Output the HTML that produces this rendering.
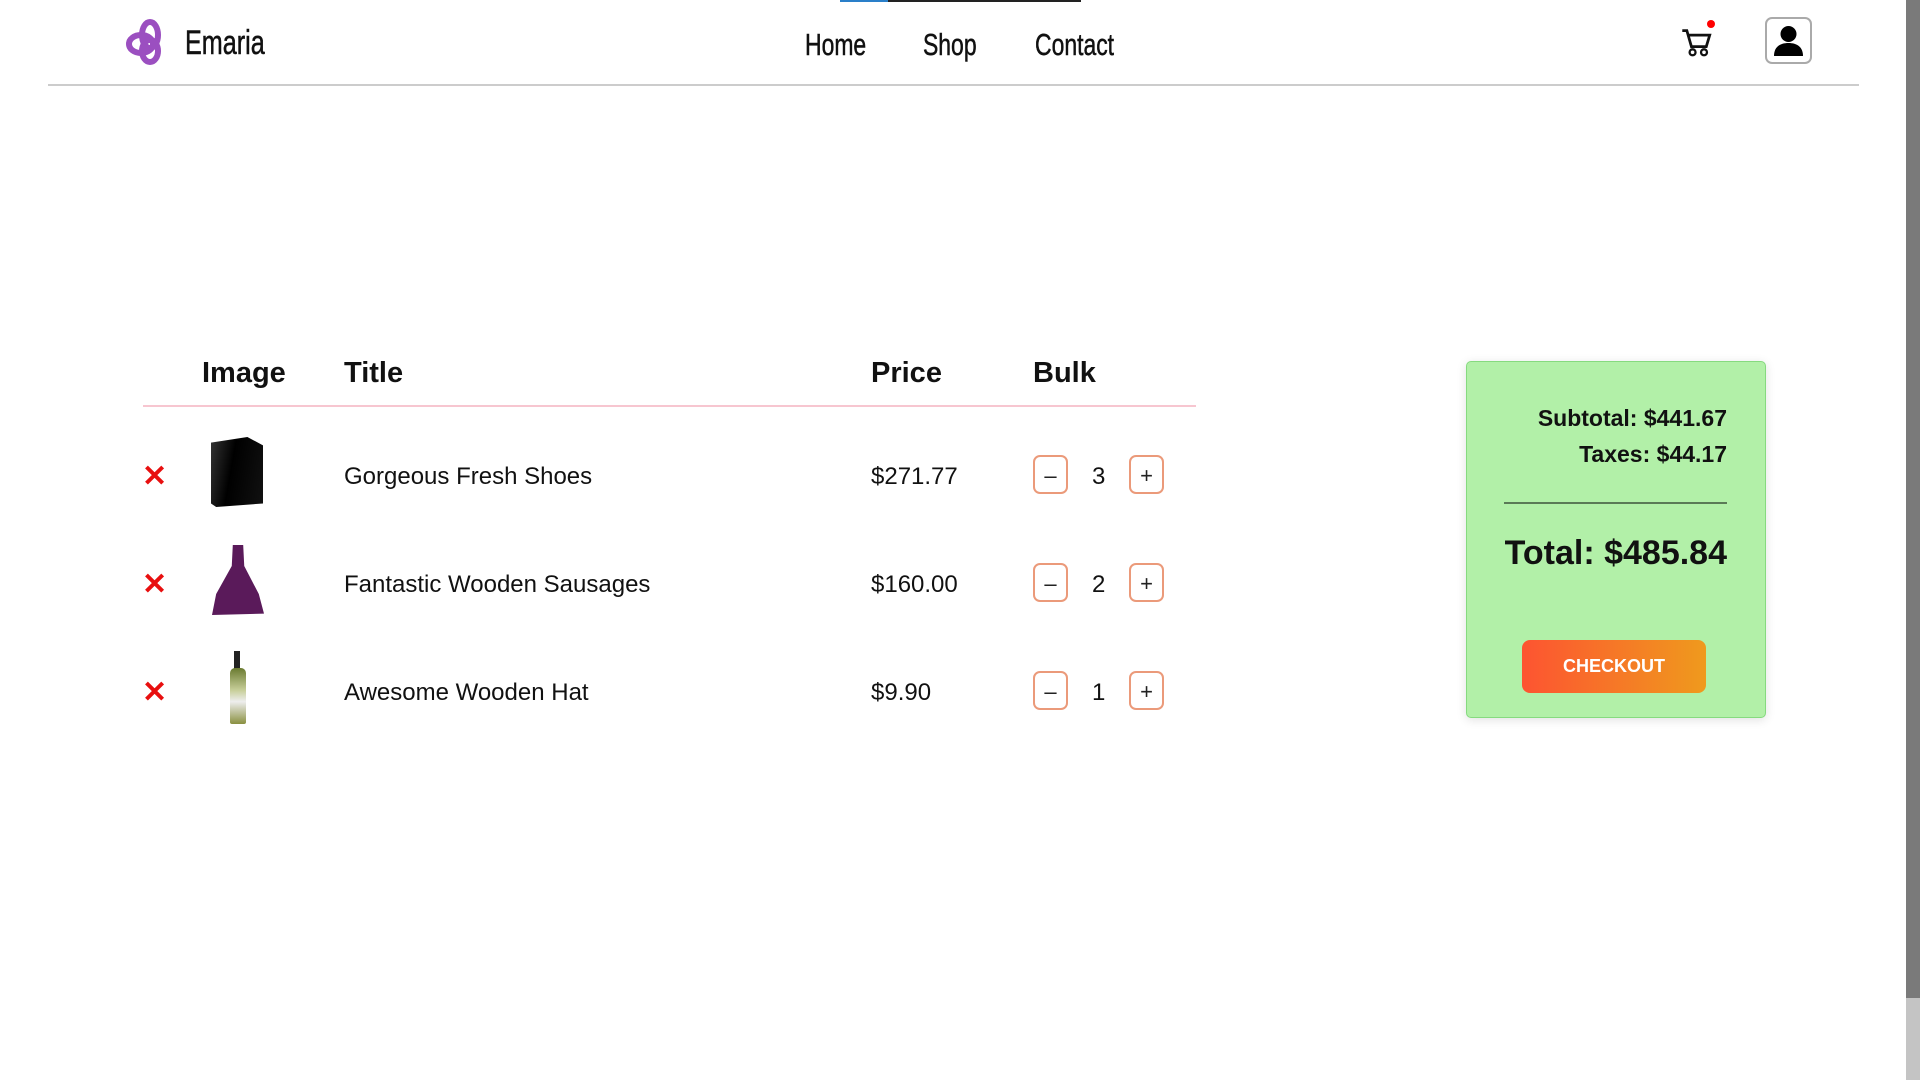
<!DOCTYPE html>
<html><head><meta charset="utf-8"><style>
body{margin:0;width:1920px;height:1080px;position:relative;background:#fff;font-family:"Liberation Sans",sans-serif;color:#111;overflow:hidden}
.a{position:absolute}
.nav{font-size:31px;transform:scaleX(.74);transform-origin:left center;top:27px;color:#111;-webkit-text-stroke:.5px #111}
.th{font-size:29px;font-weight:bold;top:357px}
.row{font-size:24px}
.btn{position:absolute;width:35px;height:39px;border:2px solid #eb9a7a;border-radius:7px;box-sizing:border-box;font-size:22px;text-align:center;line-height:37px;color:#222}
.x{color:#e80f0f;font-size:30px;font-weight:bold}
</style></head><body>
<div class="a" style="left:840px;top:0;width:48px;height:2px;background:#2a7fc9"></div>
<div class="a" style="left:888px;top:0;width:193px;height:2px;background:#222"></div>
<svg class="a" style="left:124px;top:19px" width="46" height="46" viewBox="0 0 46 46"><g fill="none" stroke="#9b4fc0" stroke-width="6"><ellipse cx="17" cy="25" rx="12" ry="9"/><ellipse cx="26" cy="16" rx="8" ry="13"/><ellipse cx="26" cy="32" rx="8" ry="11"/></g></svg>
<div class="a nav" style="left:185px;top:24px;font-size:34px">Emaria</div>
<div class="a nav" style="left:805px">Home</div>
<div class="a nav" style="left:923px">Shop</div>
<div class="a nav" style="left:1035px">Contact</div>
<svg class="a" style="left:1680px;top:26px" width="32" height="32" viewBox="0 0 28 28"><path d="M2 4h4l4 14h13l3-10H8" fill="none" stroke="#111" stroke-width="2.4"/><circle cx="11" cy="23" r="2.6" fill="none" stroke="#111" stroke-width="2"/><circle cx="21" cy="23" r="2.6" fill="none" stroke="#111" stroke-width="2"/></svg>
<div class="a" style="left:1707px;top:20px;width:8px;height:8px;border-radius:50%;background:#f00"></div>
<div class="a" style="left:1765px;top:17px;width:47px;height:47px;border:2px solid #aaa;border-radius:7px;box-sizing:border-box;overflow:hidden">
<svg width="43" height="43" viewBox="0 0 43 43"><circle cx="21.5" cy="15" r="8" fill="#000"/><path d="M7 37c0-9 6-13 14.5-13S36 28 36 37z" fill="#000"/></svg></div>
<div class="a" style="left:48px;top:84px;width:1811px;height:2px;background:#ccc"></div>
<div class="a" style="left:1906px;top:0;width:14px;height:998px;background:#7a7a7a"></div>
<div class="a" style="left:1906px;top:998px;width:14px;height:82px;background:#c4c4c4"></div>

<div class="a th" style="left:202px">Image</div>
<div class="a th" style="left:344px">Title</div>
<div class="a th" style="left:871px">Price</div>
<div class="a th" style="left:1033px">Bulk</div>
<div class="a" style="left:143px;top:405px;width:1053px;height:2px;background:#f7c6d0"></div>

<div class="a x" style="left:142px;top:459px">✕</div>
<div class="a" style="left:211px;top:437px;width:52px;height:70px;background:linear-gradient(100deg,#333,#000 40%,#111);clip-path:polygon(0 8%,70% 0,100% 12%,100% 95%,10% 100%,0 95%)"></div>
<div class="a row" style="left:344px;top:463px">Gorgeous Fresh Shoes</div>
<div class="a row" style="left:871px;top:463px">$271.77</div>
<div class="btn" style="left:1033px;top:455px">–</div>
<div class="a row" style="left:1092px;top:463px">3</div>
<div class="btn" style="left:1129px;top:455px">+</div>

<div class="a x" style="left:142px;top:567px">✕</div>
<div class="a" style="left:212px;top:545px;width:52px;height:70px;background:#5a1a5a;clip-path:polygon(40% 0,60% 0,62% 30%,90% 70%,100% 98%,0 100%,8% 70%,38% 30%)"></div>
<div class="a row" style="left:344px;top:571px">Fantastic Wooden Sausages</div>
<div class="a row" style="left:871px;top:571px">$160.00</div>
<div class="btn" style="left:1033px;top:563px">–</div>
<div class="a row" style="left:1092px;top:571px">2</div>
<div class="btn" style="left:1129px;top:563px">+</div>

<div class="a x" style="left:142px;top:675px">✕</div>
<div class="a" style="left:234px;top:651px;width:6px;height:20px;background:#222"></div>
<div class="a" style="left:230px;top:668px;width:16px;height:56px;background:linear-gradient(#6a7a30,#c8cf9a 40%,#eee 60%,#8a9040);border-radius:5px 5px 2px 2px"></div>
<div class="a row" style="left:344px;top:679px">Awesome Wooden Hat</div>
<div class="a row" style="left:871px;top:679px">$9.90</div>
<div class="btn" style="left:1033px;top:671px">–</div>
<div class="a row" style="left:1092px;top:679px">1</div>
<div class="btn" style="left:1129px;top:671px">+</div>

<div class="a" style="left:1466px;top:361px;width:300px;height:357px;background:#b2f0a8;border:1px solid #86da7f;border-radius:5px;box-sizing:border-box;box-shadow:0 2px 10px rgba(0,0,0,.12)"></div>
<div class="a" style="left:1480px;width:247px;top:400px;text-align:right;font-size:23px;font-weight:bold;line-height:36px">Subtotal: $441.67<br>Taxes: $44.17</div>
<div class="a" style="left:1504px;top:502px;width:223px;height:2px;background:#5a7a56"></div>
<div class="a" style="left:1480px;width:247px;top:534px;text-align:right;font-size:34px;font-weight:bold">Total: $485.84</div>
<div class="a" style="left:1522px;top:640px;width:184px;height:53px;border-radius:8px;background:linear-gradient(90deg,#fd5431,#ef9a1d);color:#fff;font-weight:bold;font-size:18px;text-align:center;line-height:53px">CHECKOUT</div>
</body></html>
